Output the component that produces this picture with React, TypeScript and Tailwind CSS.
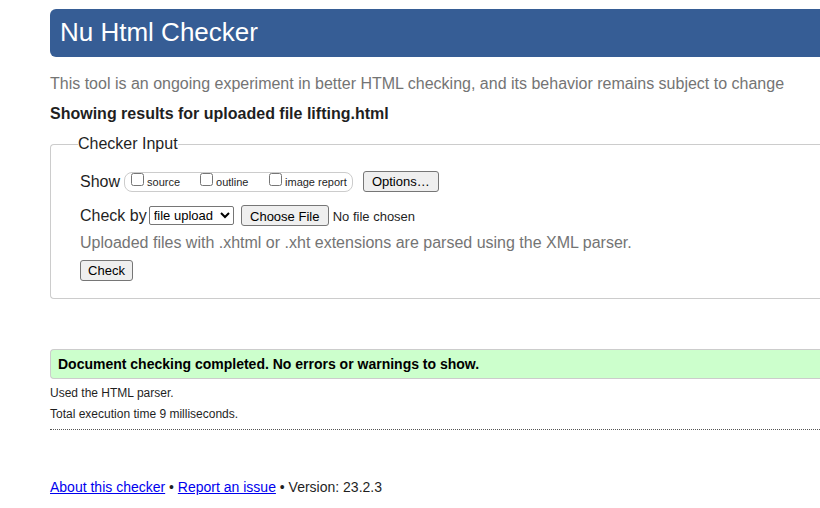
import React from "react";

const buttonClass =
  "h-[21px] rounded-[3px] border border-[#767676] bg-[#efefef] text-[13px] leading-4 text-black";

const showOptions = [
  { id: "source", label: "source", width: "w-[69px]" },
  { id: "outline", label: "outline", width: "w-[69px]" },
  { id: "image-report", label: "image report", width: "" },
];

function ShowOptions() {
  return (
    <div className="ml-1 flex h-5 rounded-lg border border-[#cccccc] pr-[5px] pl-[6px]">
      {showOptions.map((option) => (
        <div key={option.id} className={`flex shrink-0 items-start ${option.width}`}>
          <input type="checkbox" id={option.id} className="m-0 size-[13px]" />
          <label htmlFor={option.id} className="ml-[3px] text-[11px] leading-[19px]">
            {option.label}
          </label>
        </div>
      ))}
    </div>
  );
}

export default function App() {
  return (
    <main className="overflow-x-hidden bg-white pt-[9px] pb-2 pl-[50px] font-['Liberation_Sans',Arial,sans-serif] text-base leading-6 text-[#1f1f1f]">
      <h1 className="h-12 rounded-l-md bg-[#365d95] pl-[10px] text-[26px] leading-[46px] text-white">
        Nu Html Checker
      </h1>
      <p className="mt-[15px] whitespace-nowrap text-[#747474]">
        This tool is an ongoing experiment in better HTML checking, and its behavior remains subject to change
      </p>
      <h2 className="mt-[6px] font-bold">Showing results for uploaded file lifting.html</h2>

      <form className="mt-[6px]" onSubmit={(event) => event.preventDefault()}>
        <fieldset className="rounded-l border border-r-0 border-[#cccccc] pb-[17px] pl-[27px]">
          <legend>Checker Input</legend>
          <div className="pl-[2px]">
            <div className="mt-[15px] flex h-[21px] items-center">
              <span>Show</span>
              <ShowOptions />
              <button type="button" className={`${buttonClass} ml-[10px] w-[76px]`}>
                Options…
              </button>
            </div>
            <div className="mt-[13px] flex h-[21px] items-center">
              <label htmlFor="docselect">Check by</label>
              <select
                id="docselect"
                className="ml-[2px] h-[19px] w-[85px] rounded-[2px] border border-[#767676] bg-white text-[13px] text-black"
              >
                <option>file upload</option>
                <option>address</option>
                <option>text input</option>
              </select>
              <input
                type="file"
                aria-label="File to check"
                className="ml-[7px] h-[21px] w-[260px] text-[13px] leading-[21px] file:mr-1 file:h-[21px] file:w-[88px] file:rounded-[3px] file:border file:border-[#767676] file:bg-[#efefef] file:p-0 file:text-black"
              />
            </div>
            <p className="mt-[5px] text-[#747474]">
              Uploaded files with .xhtml or .xht extensions are parsed using the XML parser.
            </p>
            <button type="submit" className={`${buttonClass} mt-[5px] block w-[53px]`}>
              Check
            </button>
          </div>
        </fieldset>
      </form>

      <section className="mt-[50px]">
        <p className="rounded-l border border-r-0 border-[#cccccc] bg-[#ccffcc] pl-[7px] text-sm leading-7 font-bold text-black">
          Document checking completed. No errors or warnings to show.
        </p>
        <div className="mt-1 border-b border-dotted border-[#555555] pb-1 text-xs leading-[21px]">
          <p>Used the HTML parser.</p>
          <p>Total execution time 9 milliseconds.</p>
        </div>
      </section>

      <footer className="mt-[45px] text-sm leading-6">
        <a href="#about" className="text-[#0000ee] underline">
          About this checker
        </a>{" "}
        •{" "}
        <a href="#issue" className="text-[#0000ee] underline">
          Report an issue
        </a>{" "}
        • Version: 23.2.3
      </footer>
    </main>
  );
}
